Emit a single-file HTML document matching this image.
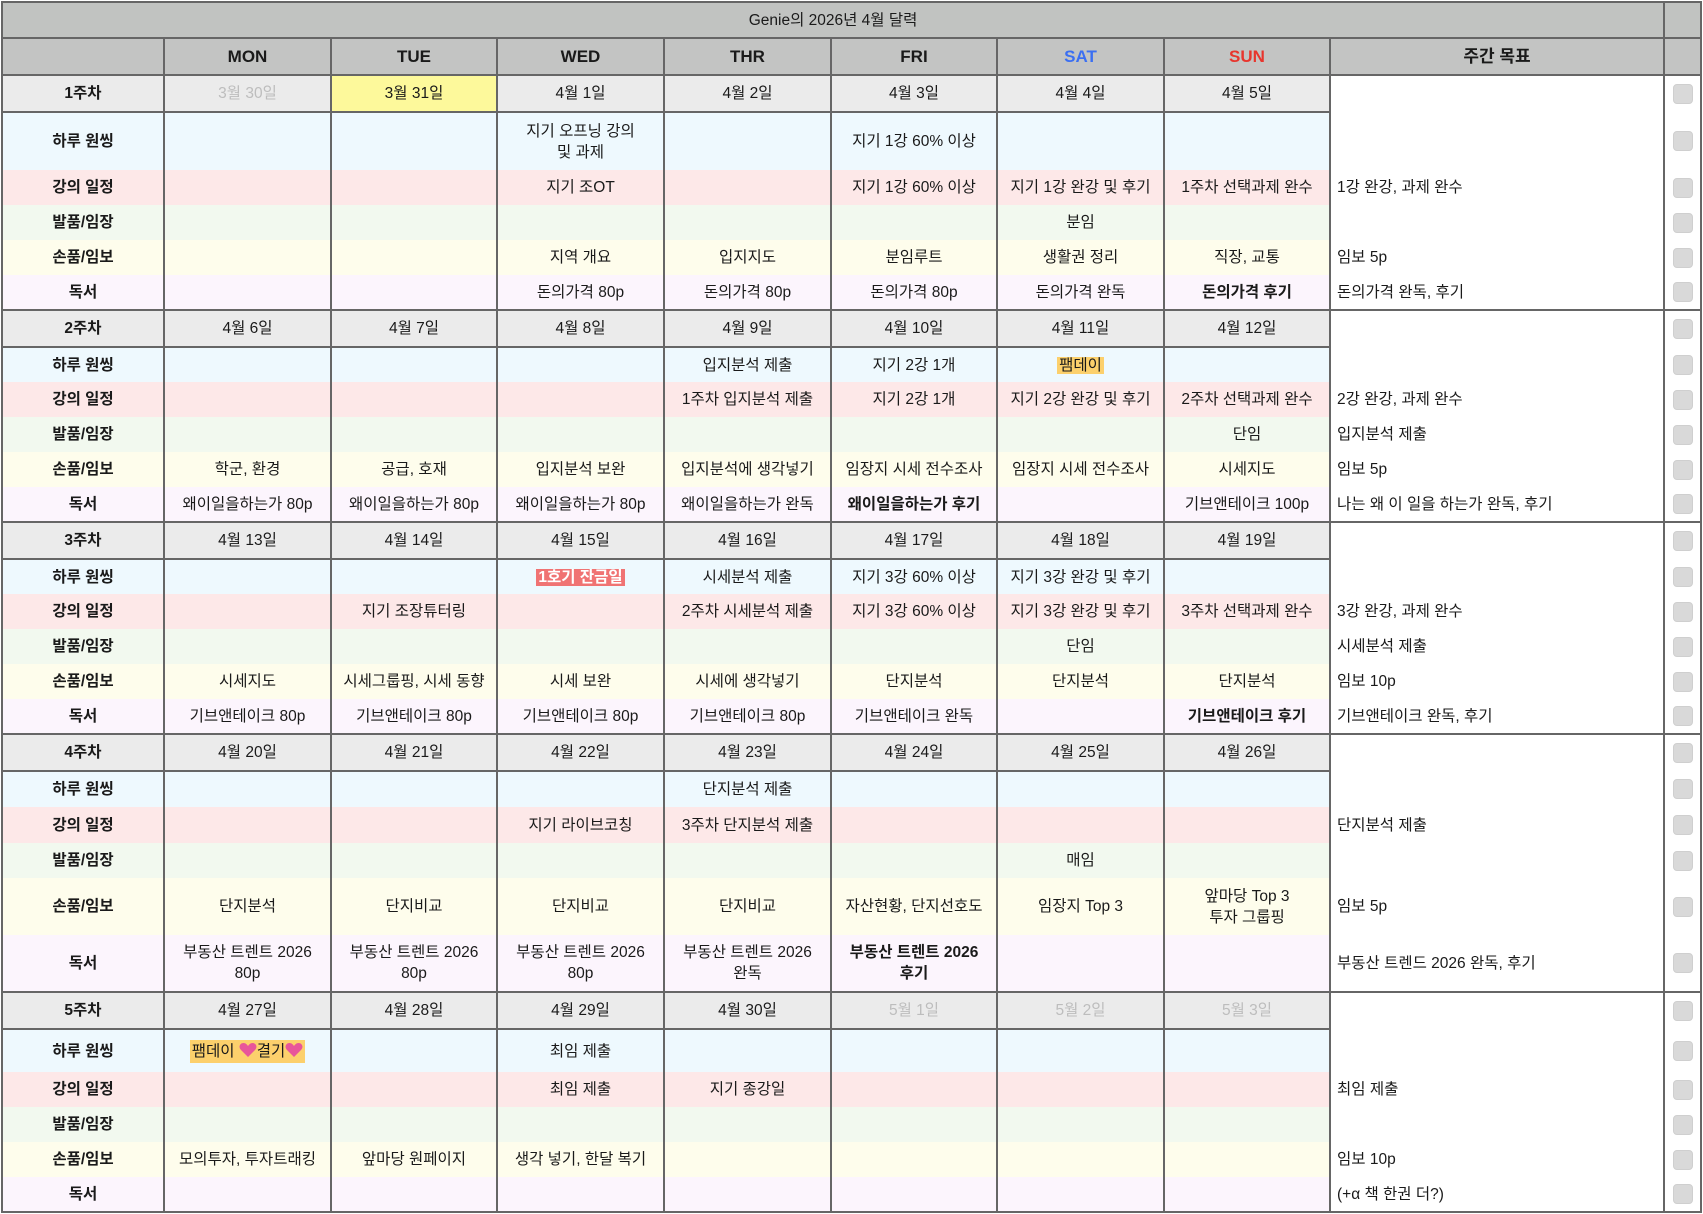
<!DOCTYPE html>
<html><head><meta charset="utf-8"><style>
*{margin:0;padding:0;box-sizing:border-box}
html,body{width:1703px;height:1214px;background:#fff;overflow:hidden}
body{font-family:"Liberation Sans","Noto Sans CJK KR",sans-serif;color:#1a1a1a;font-size:15.5px}
table{border-collapse:collapse;table-layout:fixed;position:absolute;left:1px;top:1px;width:1699px}
td{text-align:center;vertical-align:middle;padding:0;border-left:2px solid #666;border-right:2px solid #666;line-height:21px;white-space:nowrap}
tr.t td{background:#c1c3c1;height:36px;border-top:2px solid #666;border-bottom:2px solid #666;font-size:15.5px}
tr.h td{background:#c3c4c3;height:37px;font-weight:bold;font-size:17px;border-bottom:2px solid #666}
tr.w td{background:#ebebeb;height:37px;border-top:2px solid #666;border-bottom:2px solid #666}
tr.w td.g,tr.w td.c{border-bottom:none}
td.l{font-weight:bold}
tr.b td{background:#eef9fe}
tr.p td{background:#fde8e8}
tr.gr td{background:#f2f9ef}
tr.y td{background:#fefdec}
tr.v td{background:#fcf5fd}
td.g{background:#fff!important;text-align:left;padding-left:6px}
td.c{background:#fff!important}
.cb{display:inline-block;width:20px;height:20px;border-radius:4px;background:#d9d9d9;border:1px solid #cfcfcf;vertical-align:middle}
.gray{color:#bdbdbd}
.hl{background:#fcd06c;padding:0 2px}
.red{background:#f07373;color:#fff;font-weight:bold;padding:0 2px}
.sat{color:#3b6ff2}.sun{color:#e8352d}
</style></head><body>
<table>
<colgroup><col style="width:162px"><col style="width:167px"><col style="width:166px"><col style="width:167px"><col style="width:167px"><col style="width:166px"><col style="width:167px"><col style="width:166px"><col style="width:334px"><col style="width:37px"></colgroup>
<tr class="t"><td colspan="9">Genie의 2026년 4월 달력</td><td></td></tr>
<tr class="h"><td></td><td>MON</td><td>TUE</td><td>WED</td><td>THR</td><td>FRI</td><td class="sat">SAT</td><td class="sun">SUN</td><td>주간 목표</td><td></td></tr>

<tr class="w"><td class="l">1주차</td><td class="gray">3월 30일</td><td style="background:#fdf99b">3월 31일</td><td>4월 1일</td><td>4월 2일</td><td>4월 3일</td><td>4월 4일</td><td>4월 5일</td><td class="g"></td><td class="c"><span class="cb"></span></td></tr>
<tr class="b" style="height:58px"><td class="l">하루 원씽</td><td></td><td></td><td>지기 오프닝 강의<br>및 과제</td><td></td><td>지기 1강 60% 이상</td><td></td><td></td><td class="g"></td><td class="c"><span class="cb"></span></td></tr>
<tr class="p" style="height:35px"><td class="l">강의 일정</td><td></td><td></td><td>지기 조OT</td><td></td><td>지기 1강 60% 이상</td><td>지기 1강 완강 및 후기</td><td>1주차 선택과제 완수</td><td class="g">1강 완강, 과제 완수</td><td class="c"><span class="cb"></span></td></tr>
<tr class="gr" style="height:35px"><td class="l">발품/임장</td><td></td><td></td><td></td><td></td><td></td><td>분임</td><td></td><td class="g"></td><td class="c"><span class="cb"></span></td></tr>
<tr class="y" style="height:35px"><td class="l">손품/임보</td><td></td><td></td><td>지역 개요</td><td>입지지도</td><td>분임루트</td><td>생활권 정리</td><td>직장, 교통</td><td class="g">임보 5p</td><td class="c"><span class="cb"></span></td></tr>
<tr class="v" style="height:35px"><td class="l">독서</td><td></td><td></td><td>돈의가격 80p</td><td>돈의가격 80p</td><td>돈의가격 80p</td><td>돈의가격 완독</td><td><b>돈의가격 후기</b></td><td class="g">돈의가격 완독, 후기</td><td class="c"><span class="cb"></span></td></tr>

<tr class="w"><td class="l">2주차</td><td>4월 6일</td><td>4월 7일</td><td>4월 8일</td><td>4월 9일</td><td>4월 10일</td><td>4월 11일</td><td>4월 12일</td><td class="g"></td><td class="c"><span class="cb"></span></td></tr>
<tr class="b" style="height:35px"><td class="l">하루 원씽</td><td></td><td></td><td></td><td>입지분석 제출</td><td>지기 2강 1개</td><td><span class="hl">팸데이</span></td><td></td><td class="g"></td><td class="c"><span class="cb"></span></td></tr>
<tr class="p" style="height:35px"><td class="l">강의 일정</td><td></td><td></td><td></td><td>1주차 입지분석 제출</td><td>지기 2강 1개</td><td>지기 2강 완강 및 후기</td><td>2주차 선택과제 완수</td><td class="g">2강 완강, 과제 완수</td><td class="c"><span class="cb"></span></td></tr>
<tr class="gr" style="height:35px"><td class="l">발품/임장</td><td></td><td></td><td></td><td></td><td></td><td></td><td>단임</td><td class="g">입지분석 제출</td><td class="c"><span class="cb"></span></td></tr>
<tr class="y" style="height:35px"><td class="l">손품/임보</td><td>학군, 환경</td><td>공급, 호재</td><td>입지분석 보완</td><td>입지분석에 생각넣기</td><td>임장지 시세 전수조사</td><td>임장지 시세 전수조사</td><td>시세지도</td><td class="g">임보 5p</td><td class="c"><span class="cb"></span></td></tr>
<tr class="v" style="height:35px"><td class="l">독서</td><td>왜이일을하는가 80p</td><td>왜이일을하는가 80p</td><td>왜이일을하는가 80p</td><td>왜이일을하는가 완독</td><td><b>왜이일을하는가 후기</b></td><td></td><td>기브앤테이크 100p</td><td class="g">나는 왜 이 일을 하는가 완독, 후기</td><td class="c"><span class="cb"></span></td></tr>

<tr class="w"><td class="l">3주차</td><td>4월 13일</td><td>4월 14일</td><td>4월 15일</td><td>4월 16일</td><td>4월 17일</td><td>4월 18일</td><td>4월 19일</td><td class="g"></td><td class="c"><span class="cb"></span></td></tr>
<tr class="b" style="height:35px"><td class="l">하루 원씽</td><td></td><td></td><td><span class="red">1호기 잔금일</span></td><td>시세분석 제출</td><td>지기 3강 60% 이상</td><td>지기 3강 완강 및 후기</td><td></td><td class="g"></td><td class="c"><span class="cb"></span></td></tr>
<tr class="p" style="height:35px"><td class="l">강의 일정</td><td></td><td>지기 조장튜터링</td><td></td><td>2주차 시세분석 제출</td><td>지기 3강 60% 이상</td><td>지기 3강 완강 및 후기</td><td>3주차 선택과제 완수</td><td class="g">3강 완강, 과제 완수</td><td class="c"><span class="cb"></span></td></tr>
<tr class="gr" style="height:35px"><td class="l">발품/임장</td><td></td><td></td><td></td><td></td><td></td><td>단임</td><td></td><td class="g">시세분석 제출</td><td class="c"><span class="cb"></span></td></tr>
<tr class="y" style="height:35px"><td class="l">손품/임보</td><td>시세지도</td><td>시세그룹핑, 시세 동향</td><td>시세 보완</td><td>시세에 생각넣기</td><td>단지분석</td><td>단지분석</td><td>단지분석</td><td class="g">임보 10p</td><td class="c"><span class="cb"></span></td></tr>
<tr class="v" style="height:35px"><td class="l">독서</td><td>기브앤테이크 80p</td><td>기브앤테이크 80p</td><td>기브앤테이크 80p</td><td>기브앤테이크 80p</td><td>기브앤테이크 완독</td><td></td><td><b>기브앤테이크 후기</b></td><td class="g">기브앤테이크 완독, 후기</td><td class="c"><span class="cb"></span></td></tr>

<tr class="w"><td class="l">4주차</td><td>4월 20일</td><td>4월 21일</td><td>4월 22일</td><td>4월 23일</td><td>4월 24일</td><td>4월 25일</td><td>4월 26일</td><td class="g"></td><td class="c"><span class="cb"></span></td></tr>
<tr class="b" style="height:36px"><td class="l">하루 원씽</td><td></td><td></td><td></td><td>단지분석 제출</td><td></td><td></td><td></td><td class="g"></td><td class="c"><span class="cb"></span></td></tr>
<tr class="p" style="height:36px"><td class="l">강의 일정</td><td></td><td></td><td>지기 라이브코칭</td><td>3주차 단지분석 제출</td><td></td><td></td><td></td><td class="g">단지분석 제출</td><td class="c"><span class="cb"></span></td></tr>
<tr class="gr" style="height:35px"><td class="l">발품/임장</td><td></td><td></td><td></td><td></td><td></td><td>매임</td><td></td><td class="g"></td><td class="c"><span class="cb"></span></td></tr>
<tr class="y" style="height:57px"><td class="l">손품/임보</td><td>단지분석</td><td>단지비교</td><td>단지비교</td><td>단지비교</td><td>자산현황, 단지선호도</td><td>임장지 Top 3</td><td>앞마당 Top 3<br>투자 그룹핑</td><td class="g">임보 5p</td><td class="c"><span class="cb"></span></td></tr>
<tr class="v" style="height:57px"><td class="l">독서</td><td>부동산 트렌트 2026<br>80p</td><td>부동산 트렌트 2026<br>80p</td><td>부동산 트렌트 2026<br>80p</td><td>부동산 트렌트 2026<br>완독</td><td><b>부동산 트렌트 2026<br>후기</b></td><td></td><td></td><td class="g">부동산 트렌드 2026 완독, 후기</td><td class="c"><span class="cb"></span></td></tr>

<tr class="w"><td class="l">5주차</td><td>4월 27일</td><td>4월 28일</td><td>4월 29일</td><td>4월 30일</td><td class="gray">5월 1일</td><td class="gray">5월 2일</td><td class="gray">5월 3일</td><td class="g"></td><td class="c"><span class="cb"></span></td></tr>
<tr class="b" style="height:43px"><td class="l">하루 원씽</td><td><span class="hl" style="padding:3px 2px">팸데이 <svg width="18" height="16" viewBox="0 0 18 16" style="vertical-align:-2px"><path d="M9 15 L2 8 C-1 5 1 1 4.5 1 C6.5 1 8 2.5 9 4 C10 2.5 11.5 1 13.5 1 C17 1 19 5 16 8 Z" fill="#e8559a"/></svg>결기<svg width="18" height="16" viewBox="0 0 18 16" style="vertical-align:-2px"><path d="M9 15 L2 8 C-1 5 1 1 4.5 1 C6.5 1 8 2.5 9 4 C10 2.5 11.5 1 13.5 1 C17 1 19 5 16 8 Z" fill="#e8559a"/></svg></span></td><td></td><td>최임 제출</td><td></td><td></td><td></td><td></td><td class="g"></td><td class="c"><span class="cb"></span></td></tr>
<tr class="p" style="height:35px"><td class="l">강의 일정</td><td></td><td></td><td>최임 제출</td><td>지기 종강일</td><td></td><td></td><td></td><td class="g">최임 제출</td><td class="c"><span class="cb"></span></td></tr>
<tr class="gr" style="height:35px"><td class="l">발품/임장</td><td></td><td></td><td></td><td></td><td></td><td></td><td></td><td class="g"></td><td class="c"><span class="cb"></span></td></tr>
<tr class="y" style="height:35px"><td class="l">손품/임보</td><td>모의투자, 투자트래킹</td><td>앞마당 원페이지</td><td>생각 넣기, 한달 복기</td><td></td><td></td><td></td><td></td><td class="g">임보 10p</td><td class="c"><span class="cb"></span></td></tr>
<tr class="v" style="height:35px;border-bottom:2px solid #666"><td class="l">독서</td><td></td><td></td><td></td><td></td><td></td><td></td><td></td><td class="g">(+α 책 한권 더?)</td><td class="c"><span class="cb"></span></td></tr>
</table>
</body></html>
